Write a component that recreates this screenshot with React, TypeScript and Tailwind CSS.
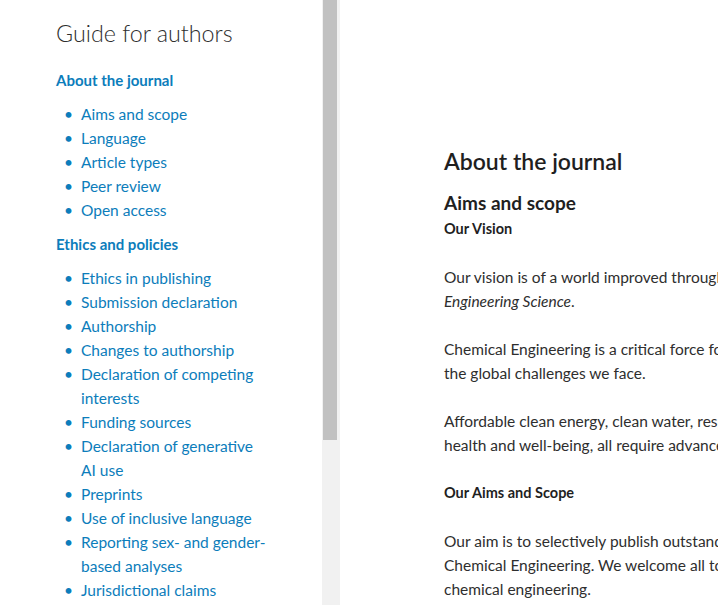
import React from "react";

type NavItem = { label: string };
type NavSection = { title: string; items: NavItem[] };

const sections: NavSection[] = [
  {
    title: "About the journal",
    items: [
      { label: "Aims and scope" },
      { label: "Language" },
      { label: "Article types" },
      { label: "Peer review" },
      { label: "Open access" },
    ],
  },
  {
    title: "Ethics and policies",
    items: [
      { label: "Ethics in publishing" },
      { label: "Submission declaration" },
      { label: "Authorship" },
      { label: "Changes to authorship" },
      { label: "Declaration of competing interests" },
      { label: "Funding sources" },
      { label: "Declaration of generative AI use" },
      { label: "Preprints" },
      { label: "Use of inclusive language" },
      { label: "Reporting sex- and gender-based analyses" },
      { label: "Jurisdictional claims" },
    ],
  },
];

function Sidebar() {
  return (
    <nav className="w-[322px] shrink-0 pl-14 pr-6 pt-[18px]">
      <h1 className="text-[23.3px] leading-[30px] font-light text-[#2e2e2e]">Guide for authors</h1>
      <div className="mt-[20px] flex flex-col gap-[10px]">
        {sections.map((s) => (
          <div key={s.title}>
            <h2 className="text-[15px] leading-[24px] font-bold text-[#0c7dbb]">{s.title}</h2>
            <ul className="mt-[10px]">
              {s.items.map((it) => (
                <li key={it.label} className="flex text-[15.5px] leading-[24px] text-[#0c7dbb]">
                  <span className="w-[25px] shrink-0 pl-[8px] text-[#0c7dbb]">•</span>
                  <a className="max-w-[186px]">{it.label}</a>
                </li>
              ))}
            </ul>
          </div>
        ))}
      </div>
    </nav>
  );
}

function Scrollbar() {
  return (
    <div className="w-[18px] shrink-0 bg-[#f1f1f1] flex justify-center">
      <div className="w-[14px] h-[440px] bg-[#c1c1c1] -ml-[2px]" />
    </div>
  );
}

function Content() {
  return (
    <main className="flex-1 min-w-0 pl-[104px] pt-[145px] text-[#2e2e2e] whitespace-nowrap overflow-hidden">
      <h2 className="text-[23px] leading-[32px] font-semibold text-[#1f1f1f]">About the journal</h2>
      <h3 className="mt-[14px] text-[19px] leading-[24px] font-bold text-[#1f1f1f]">Aims and scope</h3>
      <p className="text-[14.5px] leading-[28px] font-bold text-[#1f1f1f]">Our Vision</p>
      <div className="mt-[22px] flex flex-col gap-[24px] text-[15.5px] leading-[24px]">
        <p>
          Our vision is of a world improved through Chemical Engineering research published in
          <br />
          <em>Engineering Science</em>.
        </p>
        <p>
          Chemical Engineering is a critical force for the development of solutions to
          <br />
          the global challenges we face.
        </p>
        <p>
          Affordable clean energy, clean water, responsible production and consumption,
          <br />
          health and well-being, all require advanced chemical engineering.
        </p>
        <p className="font-bold text-[14.5px] text-[#1f1f1f]">Our Aims and Scope</p>
        <p>
          Our aim is to selectively publish outstanding research in all areas of
          <br />
          Chemical Engineering. We welcome all topics that advance the science of
          <br />
          chemical engineering.
        </p>
      </div>
    </main>
  );
}

export default function App() {
  return (
    <div
      className="flex h-[605px] w-[718px] overflow-hidden bg-white"
      style={{ fontFamily: "Lato, 'Noto Sans', sans-serif" }}
    >
      <Sidebar />
      <Scrollbar />
      <Content />
    </div>
  );
}
